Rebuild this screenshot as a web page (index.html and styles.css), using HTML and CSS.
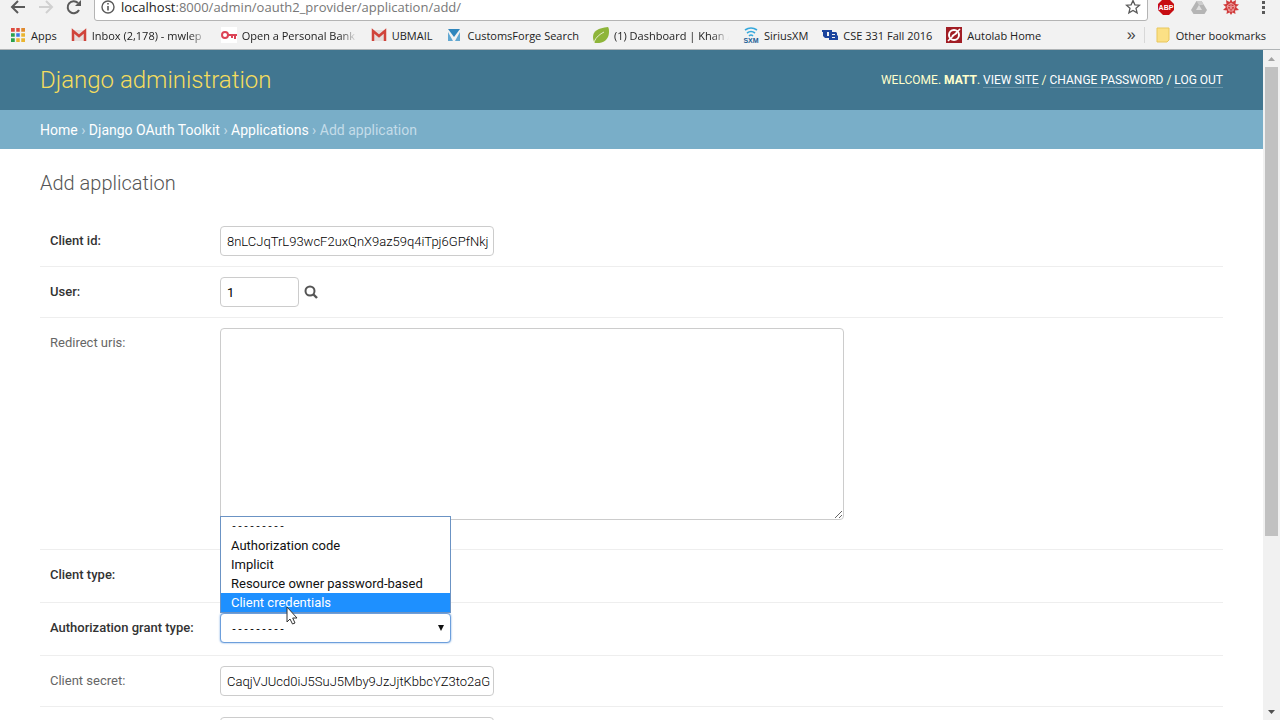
FILE: index.html
```
<!DOCTYPE html>
<html lang="en">
<head>
  <meta charset="UTF-8" />
  <meta name="viewport" content="width=device-width, initial-scale=1" />
  <title>Add application | Django site admin</title>
  <link rel="stylesheet" href="styles.css">
</head>
<body>

<!-- Browser bar -->
<div class="browser">
  <div class="toolbar">
    <button class="nav-btn" aria-label="Back">
      <svg width="16" height="16" viewBox="0 0 16 16"><path d="M15 8H3M8 2L2 8l6 6" fill="none" stroke="#5a5a5a" stroke-width="2"/></svg>
    </button>
    <button class="nav-btn" aria-label="Forward">
      <svg width="16" height="16" viewBox="0 0 16 16"><path d="M1 8h12M8 2l6 6-6 6" fill="none" stroke="#d0d0d0" stroke-width="2"/></svg>
    </button>
    <button class="nav-btn" aria-label="Reload">
      <svg width="16" height="16" viewBox="0 0 16 16"><path d="M13 11a6 6 0 1 1-1-7" fill="none" stroke="#5a5a5a" stroke-width="2"/><path d="M15 1v6H9z" fill="#5a5a5a"/></svg>
    </button>
    <div class="address">
      <svg width="14" height="14" viewBox="0 0 14 14"><circle cx="7" cy="7" r="6" fill="none" stroke="#5a5a5a" stroke-width="1.4"/><path d="M7 6v4.500M7 3v1.600" stroke="#5a5a5a" stroke-width="1.600"/></svg>
      <span class="url">localhost<span>:8000/admin/oauth2_provider/application/add/</span></span>
      <svg width="16" height="16" viewBox="0 0 16 16"><path d="M8 1.500l1.900 4.300 4.700.4-3.600 3.100 1.100 4.600L8 11.500l-4.100 2.400L5 9.300 1.400 6.200l4.700-.4z" fill="none" stroke="#5a5a5a" stroke-width="1.300"/></svg>
    </div>
    <div class="extensions">
      <svg width="18" height="18" viewBox="0 0 18 18"><path d="M6 1h6l5 5v6l-5 5H6l-5-5V6z" fill="#c70d12"/><text x="9" y="12" text-anchor="middle" class="abp">ABP</text></svg>
      <svg width="16" height="16" viewBox="0 0 16 16"><path d="M5.500 2h5L16 11l-2.500 4h-11L0 11z" fill="#b5b5b5"/><path d="M8 6l3 5H5z" fill="#dedede"/><path d="M5.500 2h5L13 6H8z" fill="#cdcdcd"/></svg>
      <svg width="16" height="16" viewBox="0 0 16 16"><path d="M8 0l1.500 3L13 1l-.5 4 3.500.5L13 8l3 3-4 .5.5 3.500-3-1.500L8 16l-1.500-2.500-3 1.500.5-3.500L0 11l3-3L0 5.500 3.500 5 3 1l3.500 2z" fill="#d03c3c"/><path d="M8 4l4 3-2 5H6L4 7zM8 4v4M4 7l4 1 4-1M6 12l2-4 2 4" fill="none" stroke="#eda0a0"/></svg>
      <svg width="16" height="16" viewBox="0 0 16 16"><path d="M7 2h3v3H7zM7 7h3v3H7zM7 12h3v3H7z" fill="#5a5a5a"/></svg>
    </div>
  </div>

  <nav class="bookmarks">
    <a href="#">
      <svg width="16" height="16" viewBox="0 0 16 16"><path d="M1 1h4v4H1zM6 1h4v4H6z" fill="#dd4b3e"/><path d="M11 1h4v4h-4z" fill="#e08a2e"/><path d="M1 6h4v4H1z" fill="#2ba24c"/><path d="M6 6h4v4H6z" fill="#3b78e7"/><path d="M11 6h4v4h-4zM11 11h4v4h-4zM6 11h4v4H6z" fill="#eab530"/><path d="M1 11h4v4H1z" fill="#2ba24c"/><path d="M5.500 0v16M10.500 0v16M0 5.500h16M0 10.500h16" stroke="#f2f2f2" stroke-width="1.500"/></svg>
      <span>Apps</span>
    </a>
    <a href="#">
      <svg width="16" height="16" viewBox="0 0 16 16"><path d="M1 3h14v11H1z" fill="#e4dedd"/><path d="M2 14V4l6 5 6-5v10" fill="none" stroke="#d0433a" stroke-width="2.500"/></svg>
      <span class="fade">Inbox (2,178) - mwlep</span>
    </a>
    <a href="#">
      <svg width="16" height="16" viewBox="0 0 16 16"><path d="M0 0h16v16H0z" fill="#fff"/><circle cx="4" cy="8" r="3" fill="none" stroke="#dc4356" stroke-width="2"/><path d="M7 8h9M11 8v3M14 8v4" stroke="#dc4356" stroke-width="2"/></svg>
      <span class="fade">Open a Personal Bank</span>
    </a>
    <a href="#">
      <svg width="16" height="16" viewBox="0 0 16 16"><path d="M1 3h14v11H1z" fill="#e4dedd"/><path d="M2 14V4l6 5 6-5v10" fill="none" stroke="#d0433a" stroke-width="2.500"/></svg>
      <span>UBMAIL</span>
    </a>
    <a href="#">
      <svg width="16" height="16" viewBox="0 0 16 16"><path d="M2 2h12L8 10z" fill="#2f86bd"/><path d="M2 5v9h5zM14 5v9H9z" fill="#62a8d2"/></svg>
      <span>CustomsForge Search</span>
    </a>
    <a href="#">
      <svg width="16" height="16" viewBox="0 0 16 16"><path d="M15 0C5 1 0 4 0 10c0 3 1 5 2 6 9 1 14-4 14-11 0-2 0-4-1-5z" fill="#8eb53a"/><path d="M1 15C3 10 7 7 11 5" stroke="#e6edcd" fill="none"/></svg>
      <span class="fade">(1) Dashboard | Khan /</span>
    </a>
    <a href="#">
      <svg width="16" height="16" viewBox="0 0 16 16"><path d="M2 3q6-4 12 0M4 6q4-3 8 0M6 9q2-2 4 0" fill="none" stroke="#35a8dc" stroke-width="1.600"/><text x="8" y="16" text-anchor="middle" class="sxm">SXM</text></svg>
      <span>SiriusXM</span>
    </a>
    <a href="#">
      <svg width="16" height="16" viewBox="0 0 16 16"><path d="M0 3h6v2H5v4h2V5H6V3h4v2H9v6H3L1 9V5H0z" fill="#1c459e"/><path d="M8 5h6l1 1v2l1 1v4H7v-2h1zM10 7v1h3V7zM10 10v1h3v-1z" fill="#1c459e" fill-rule="evenodd"/></svg>
      <span>CSE 331 Fall 2016</span>
    </a>
    <a href="#">
      <svg width="16" height="16" viewBox="0 0 16 16"><path d="M0 0h16v16H0z" fill="#a11d24"/><circle cx="8" cy="8" r="5" fill="none" stroke="#fff" stroke-width="2"/><path d="M2 14L14 2M6 9l5-3" stroke="#fff" stroke-width="1.600"/></svg>
      <span>Autolab Home</span>
    </a>
    <button class="more" aria-label="More bookmarks">»</button>
    <a href="#" class="other">
      <svg width="16" height="16" viewBox="0 0 16 16"><path d="M2 1h12v12l-2 2H2z" fill="#fbe085" stroke="#e9c75c"/></svg>
      <span>Other bookmarks</span>
    </a>
  </nav>
</div>

<div class="window">
  <div class="page">
    <header>
      <h1><a href="#">Django administration</a></h1>
      <div class="user-tools">
        Welcome. <strong>Matt</strong>.
        <a href="#">View site</a> / <a href="#">Change password</a> / <a href="#">Log out</a>
      </div>
    </header>

    <div class="breadcrumbs">
      <a href="#">Home</a> ›
      <a href="#">Django OAuth Toolkit</a> ›
      <a href="#">Applications</a> ›
      Add application
    </div>

    <main>
      <h2>Add application</h2>
      <form>
        <div class="form-row">
          <label class="required" for="client_id">Client id:</label>
          <input type="text" id="client_id" value="8nLCJqTrL93wcF2uxQnX9az59q4iTpj6GPfNkj" />
        </div>
        <div class="form-row">
          <label class="required" for="user">User:</label>
          <input type="text" id="user" class="small" value="1" />
          <a href="#" class="lookup" aria-label="Lookup">
            <svg width="14" height="14" viewBox="0 0 14 14"><circle cx="6" cy="6" r="4.500" fill="none" stroke="#555" stroke-width="2"/><path d="M9 9l4 4" stroke="#555" stroke-width="2.400"/></svg>
          </a>
        </div>
        <div class="form-row uris">
          <label for="redirect_uris">Redirect uris:</label>
          <textarea id="redirect_uris"></textarea>
        </div>
        <div class="form-row tall">
          <label class="required" for="client_type">Client type:</label>
          <select id="client_type">
            <option></option>
            <option>Confidential</option>
            <option>Public</option>
          </select>
        </div>
        <div class="form-row tall">
          <label class="required" for="grant_type">Authorization grant type:</label>
          <div class="dropdown">
            <select id="grant_type">
              <option>---------</option>
            </select>
            <svg class="arrow" width="8" height="8" viewBox="0 0 8 8"><path d="M1 1h6L4 7z" fill="#111"/></svg>
            <ul class="options" role="listbox">
              <li role="option" class="empty">---------</li>
              <li role="option">Authorization code</li>
              <li role="option">Implicit</li>
              <li role="option">Resource owner password-based</li>
              <li role="option" class="active" aria-selected="true">Client credentials</li>
            </ul>
            <svg class="cursor" width="12" height="19" viewBox="0 0 12 19"><path d="M1 1v15l3-3 2.500 5 2.500-1-2.300-5H11z" fill="#fff" stroke="#333"/></svg>
          </div>
        </div>
        <div class="form-row">
          <label for="client_secret">Client secret:</label>
          <input type="text" id="client_secret" value="CaqjVJUcd0iJ5SuJ5Mby9JzJjtKbbcYZ3to2aG" />
        </div>
        <div class="form-row">
          <label for="name"></label>
          <input type="text" id="name" />
        </div>
      </form>
    </main>
  </div>

  <!-- Scrollbar -->
  <div class="scrollbar">
    <svg width="17" height="17" viewBox="0 0 17 17"><path d="M5 11h7L8.500 7z" fill="#a3a3a3"/></svg>
    <div class="thumb"></div>
    <svg width="17" height="17" viewBox="0 0 17 17"><path d="M5 7h7l-3.500 4z" fill="#505050"/></svg>
  </div>
</div>

</body>
</html>
```

FILE: styles.css
```
* {
  box-sizing: border-box;
}
body {
  margin: 0;
  height: 100vh;
  display: flex;
  flex-direction: column;
  overflow: hidden;
  font-family: Roboto, sans-serif;
  font-size: 13px;
  color: #333;
  background: #fff;
}
a {
  text-decoration: none;
}
button {
  border: none;
  background: none;
  padding: 0;
}
svg {
  display: block;
  flex: none;
}

/* browser */
.browser {
  flex: none;
  height: 50px;
  background: #f2f2f2;
  border-bottom: 1px solid #b0b4b6;
  font-family: "Open Sans", sans-serif;
  overflow: hidden;
}
.toolbar {
  display: flex;
  align-items: center;
  height: 28px;
  margin-top: -7px;
  padding-left: 10px;
  gap: 12px;
}
.nav-btn {
  width: 16px;
}
.address {
  flex: 1;
  display: flex;
  align-items: center;
  gap: 6px;
  height: 28px;
  padding: 0 6px;
  background: #fff;
  border: 1px solid #b4b4b4;
  border-radius: 3px;
}
.url {
  flex: 1;
  font-size: 13px;
  color: #222;
}
.url span {
  color: #777;
}
.extensions {
  display: flex;
  align-items: center;
  gap: 16px;
  padding-right: 9px;
  margin-left: -3px;
}
.abp {
  font: bold 7px "Liberation Sans", sans-serif;
  fill: #fff;
}
.sxm {
  font: bold 7px "Liberation Sans", sans-serif;
  fill: #1d5f96;
}
.bookmarks {
  display: flex;
  align-items: center;
  height: 28px;
  padding: 0 14px 0 10px;
  gap: 14px;
  font-size: 11px;
  white-space: nowrap;
}
.bookmarks a {
  display: flex;
  align-items: center;
  gap: 5px;
  color: #222;
}
.fade {
  width: 115px;
  overflow: hidden;
  mask-image: linear-gradient(to right, #000 85%, transparent);
}
.more {
  margin-left: auto;
  font-size: 16px;
  color: #444;
}
.bookmarks .other {
  padding-left: 10px;
  margin-left: -6px;
  border-left: 1px solid #d8d8d8;
}

/* django page */
.window {
  flex: 1;
  display: flex;
  min-height: 0;
}
.page {
  flex: 1;
  overflow: hidden;
}
header {
  display: flex;
  align-items: center;
  justify-content: space-between;
  height: 60px;
  padding: 0 40px;
  background: #417690;
  color: #ffc;
}
h1 {
  margin: 0;
  font-size: 24px;
  font-weight: 300;
}
h1 a {
  color: #f5dd5d;
}
.user-tools {
  font-size: 12px;
  text-transform: uppercase;
}
.user-tools a {
  color: #fff;
  border-bottom: 1px solid #6b94a8;
}
.breadcrumbs {
  height: 39px;
  padding: 0 40px;
  line-height: 40px;
  font-size: 14px;
  background: #79aec8;
  color: #c4dce8;
}
.breadcrumbs a {
  color: #fff;
}
main {
  padding: 22px 40px 0;
}
h2 {
  margin: 0 0 21px;
  font-size: 20px;
  line-height: 24px;
  font-weight: 300;
  color: #555;
}
.form-row {
  display: flex;
  align-items: flex-start;
  padding: 10px;
  min-height: 51px;
  border-bottom: 1px solid #eee;
}
.form-row.tall {
  min-height: 53px;
}
.form-row.uris {
  padding-bottom: 29px;
}
label {
  flex: none;
  width: 170px;
  line-height: 30px;
  color: #666;
}
label.required {
  font-weight: 500;
  color: #333;
}
input, textarea, select {
  height: 30px;
  padding: 5px 2px 5px 6px;
  border: 1px solid #ccc;
  border-radius: 4px;
  background: #fff;
  font: 13px Roboto, sans-serif;
  color: #000;
}
input {
  width: 274px;
  font-weight: 300;
}
input.small {
  width: 79px;
  font-weight: 400;
}
textarea {
  width: 624px;
  height: 192px;
}
.lookup {
  padding: 8px 5px;
}
.dropdown {
  position: relative;
  width: 231px;
}
.dropdown select {
  display: block;
  width: 100%;
  padding: 7px 10px 5px;
  appearance: none;
  font: 10px "Liberation Mono", monospace;
  border-color: #6d9fdc;
  box-shadow: 0 0 2px #6d9fdc;
}
.arrow {
  position: absolute;
  right: 6px;
  top: 11px;
}
.options {
  position: absolute;
  left: 0;
  right: 0;
  bottom: 100%;
  margin: 0;
  padding: 0;
  list-style: none;
  background: #fff;
  border: 1px solid #6b93c4;
  color: #111;
}
.options li {
  padding: 0 10px;
  line-height: 19px;
}
.options .empty {
  font: 10px/19px "Liberation Mono", monospace;
}
.options .active {
  background: #1e90ff;
  color: #fff;
}
.cursor {
  position: absolute;
  left: 66px;
  top: -7px;
}

/* scrollbar */
.scrollbar {
  display: flex;
  flex-direction: column;
  flex: none;
  width: 17px;
  background: #f1f1f1;
}
.thumb {
  height: 70%;
  margin: 0 2px auto;
  background: #c1c1c1;
}
```
